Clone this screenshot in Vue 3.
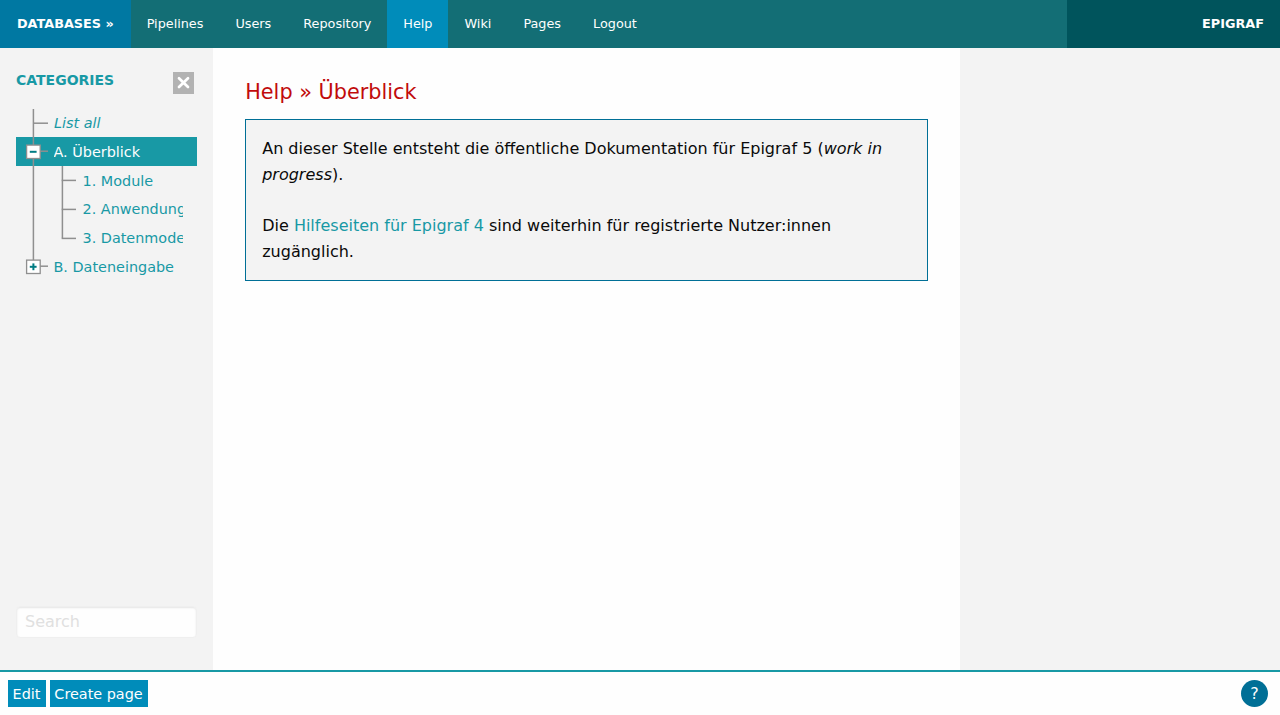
<script setup>
const nav = ['Pipelines', 'Users', 'Repository', 'Help', 'Wiki', 'Pages', 'Logout']
const tree = [
  { label: 'List all', level: 0, italic: true },
  { label: 'A. Überblick', level: 0, active: true, toggle: 'minus' },
  { label: '1. Module', level: 1 },
  { label: '2. Anwendungen', level: 1 },
  { label: '3. Datenmodell', level: 1, last: true },
  { label: 'B. Dateneingabe', level: 0, toggle: 'plus', last: true },
]
</script>

<template>
  <div class="page">
    <header class="topbar">
      <a class="databases">DATABASES »</a>
      <nav class="menu">
        <a v-for="n in nav" :key="n" :class="{ current: n === 'Help' }">{{ n }}</a>
      </nav>
      <a class="brand">EPIGRAF</a>
    </header>

    <div class="body">
      <aside class="sidebar">
        <div class="side-head">
          <h2>CATEGORIES</h2>
          <button class="close" aria-label="Close">
            <svg width="21" height="22" viewBox="0 0 21 22"><path d="M6 6.2 L15 15 M15 6.2 L6 15" stroke="#fff" stroke-width="2.7" stroke-linecap="round" /></svg>
          </button>
        </div>
        <ul class="tree">
          <li v-for="t in tree" :key="t.label" :class="{ active: t.active }">
            <svg class="lines" :width="t.level ? 61 : 32" height="29" fill="none" stroke="#8f8f8f" stroke-width="1.5">
              <path v-if="t.level || !t.last" d="M17.4 0V29" />
              <path v-else d="M17.4 0V14.5" />
              <path v-if="!t.level" d="M17.4 14.2H32" />
              <template v-else>
                <path :d="t.last ? 'M46.4 0V14.4' : 'M46.4 0V29'" />
                <path d="M45.7 14.4H60" />
              </template>
              <template v-if="t.toggle">
                <rect x="10.6" y="8.1" width="13.6" height="13.4" fill="#fff" stroke-width="1.3" />
                <path d="M13.8 14.8H20.6" stroke="#007c84" stroke-width="2" />
                <path v-if="t.toggle === 'plus'" d="M17.4 11.4V18.2" stroke="#007c84" stroke-width="2" />
              </template>
            </svg>
            <span class="label" :class="{ italic: t.italic }">{{ t.label }}</span>
          </li>
        </ul>
        <input class="search" type="text" placeholder="Search" />
      </aside>

      <main class="content">
        <h1>Help » Überblick</h1>
        <article class="box">
          <p>An dieser Stelle entsteht die öffentliche Dokumentation für Epigraf 5 (<em>work in progress</em>).</p>
          <p>Die <a>Hilfeseiten für Epigraf 4</a> sind weiterhin für registrierte Nutzer:innen zugänglich.</p>
        </article>
      </main>
      <aside class="right"></aside>
    </div>

    <footer class="footer">
      <button class="btn edit">Edit</button>
      <button class="btn create">Create page</button>
      <button class="help">?</button>
    </footer>
  </div>
</template>

<style>
body { margin: 0; overflow: hidden; }
</style>

<style scoped>
* { box-sizing: border-box; }
.page { height: 715px; display: flex; flex-direction: column; font-family: "DejaVu Sans", sans-serif; font-size: 16px; color: #0a0a0a; background: #fefefe; }
.topbar { height: 48px; display: flex; background: #136e75; color: #fefefe; font-size: 12.8px; line-height: 47px; flex: none; }
.databases { width: 130.67px; padding-left: 17px; background: #0078a2; font-weight: bold; white-space: nowrap; }
.menu { display: flex; flex: 1; }
.menu a { padding: 0 16px; }
.menu .current { background: #008cba; }
.brand { width: 213px; background: #00545c; font-weight: bold; text-align: right; padding-right: 16px; }
.body { flex: 1; display: flex; min-height: 0; }
.sidebar { width: 213px; background: #f3f3f3; padding: 24px 16px 32px; display: flex; flex-direction: column; }
.side-head { display: flex; justify-content: space-between; padding-right: 3px; height: 36.5px; flex: none; }
h2 { margin: 0; font-size: 14px; line-height: 17px; color: #1899a5; }
.close { border: 0; padding: 0; width: 21px; height: 22px; background: #b2b2b2; }
.close svg { display: block; }
.tree { list-style: none; margin: 0; padding: 0; flex: 1; }
.tree li { height: 28.8px; display: flex; overflow: hidden; padding-right: 14px; color: #1899a5; font-size: 14.4px; line-height: 29px; }
.tree .active { background: #1899a5; color: #fefefe; }
.lines { flex: none; }
.label { margin-left: 5.5px; padding-top: .5px; white-space: nowrap; overflow: hidden; flex: 1; }
.italic { font-style: italic; margin-left: 6px; }
.search { width: 181px; height: 32px; border: 1px solid #efefef; border-radius: 4px; background: #fefefe; box-shadow: inset 0 1px 2px rgba(10, 10, 10, .1); padding: 0 8px 2px; font: 16px "DejaVu Sans", sans-serif; }
.search::placeholder { color: #e0e0e0; opacity: 1; }
.content { width: 747px; padding: 32px 31.8px 0 32.2px; }
h1 { margin: 0 0 14.4px; font-size: 20.8px; font-weight: normal; line-height: 25px; color: #c10b0b; }
.box { width: 682.8px; height: 161.6px; border: 1px solid #006f96; background: #f3f3f3; padding: 16px; line-height: 25.6px; }
.box p { margin: 0 0 25.6px; }
.box a { color: #1899a5; }
.right { flex: 1; background: #f3f3f3; }
.footer { height: 45px; border-top: 2px solid #1899a5; flex: none; display: flex; align-items: flex-start; gap: 4px; padding: 8px 12px 0 8px; }
.btn { height: 27px; border: 0; padding: 0 1px 0 0; background: #008cba; color: #fefefe; font: 14.4px "DejaVu Sans", sans-serif; }
.edit { width: 38px; }
.create { width: 98px; }
.help { margin-left: auto; width: 27px; height: 27px; border: 0; border-radius: 50%; padding: 0; background: #006f96; color: #fefefe; font: 16px "DejaVu Sans", sans-serif; }
</style>
